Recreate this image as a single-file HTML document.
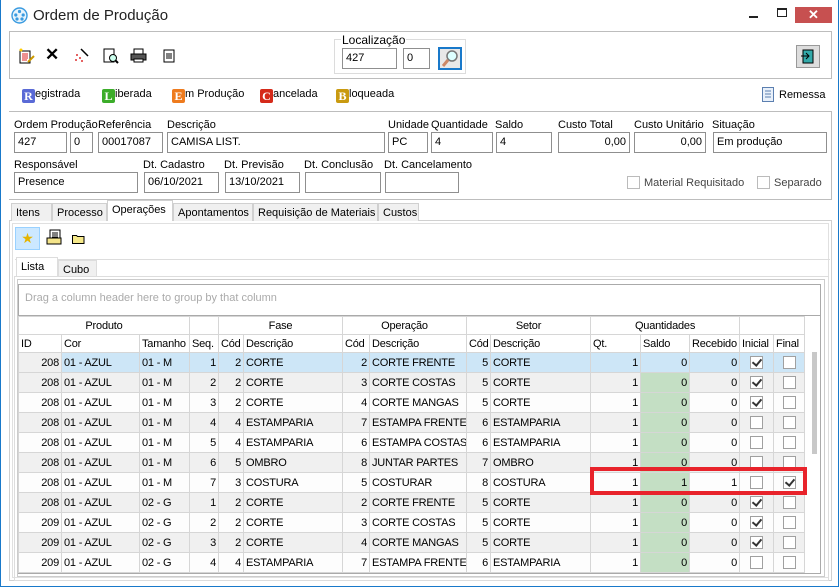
<!DOCTYPE html>
<html><head><meta charset="utf-8"><style>
*{box-sizing:border-box;margin:0;padding:0}
body{width:839px;height:587px;position:relative;overflow:hidden;background:#fff;font-family:"Liberation Sans",sans-serif;font-size:11px;color:#000}
.a{position:absolute}
.win{position:absolute;left:0;top:0;width:839px;height:587px;border:1px solid #1979ca;border-top:none;background:#fff}
.inp{position:absolute;height:21px;border:1px solid #8f8f8f;background:#fff;padding:3px 3px;font-size:11px;white-space:nowrap;overflow:hidden}
.r{text-align:right}
.lbl{position:absolute;font-size:11px;white-space:nowrap}
.panel{position:absolute;border:1px solid #bdbdbd;background:#fff}
.tab{position:absolute;top:203px;height:18px;border:1px solid #d0d0d0;border-bottom:none;background:#f0f0f0;padding:3px 4px;font-size:11px;white-space:nowrap;overflow:hidden}
.badge{display:inline-block;width:13px;height:14px;color:#fff;font-weight:bold;font-size:12px;line-height:14px;text-align:center;border-radius:2px;vertical-align:-3px;margin-right:0;font-family:"Liberation Serif",serif}
table{border-collapse:collapse;table-layout:fixed;position:absolute;left:17px;top:316px;width:786px;font-size:11px;letter-spacing:-0.2px}
td{border:1px solid #d6d6d6;height:20px;padding:0 2px;white-space:nowrap;overflow:hidden}
tr.h td{height:18px;background:#fff}
tr.h1 td{text-align:center}
td.n{text-align:right}
tr.g td{background:#f0f0f0}
tr.w td{background:#fdfdfd}
tr.s td{background:#cde6f7}
tr.s td.id{background:#f0f0f0}
td.sd{background:#c4dfc4!important}
tr.s td.sd{background:#cde6f7!important}
.cb{display:inline-block;width:13px;height:13px;border:1px solid #a0a0a0;background:#fff;vertical-align:middle;position:relative}
.cb.c::after{content:"";position:absolute;left:3px;top:0px;width:4px;height:7px;border:solid #333;border-width:0 2px 2px 0;transform:rotate(40deg)}
td.ck{text-align:center;padding:0}
</style></head><body>
<div class="win">
<svg class="a" style="left:10px;top:7px" width="17" height="17" viewBox="0 0 17 17"><circle cx="8.5" cy="8.5" r="7.5" fill="#e8f4fc" stroke="#3a9be0" stroke-width="1.4"/><circle cx="8.5" cy="4.5" r="1.6" fill="#3a9be0"/><circle cx="4.8" cy="8" r="1.6" fill="#3a9be0"/><circle cx="12.2" cy="8" r="1.6" fill="#3a9be0"/><circle cx="6" cy="12" r="1.6" fill="#3a9be0"/><circle cx="11" cy="12" r="1.6" fill="#3a9be0"/></svg>
<div class="lbl" style="left:32px;top:7px;font-size:15px;color:#222">Ordem de Produção</div>
<div class="a" style="left:748px;top:16px;width:9px;height:2px;background:#222"></div>
<div class="a" style="left:776px;top:8px;width:10px;height:9px;border:1px solid #222;border-top-width:2px"></div>
<div class="a" style="left:794px;top:7px;width:37px;height:16px;background:#c75050;color:#fff;text-align:center;font-size:13px;line-height:16px;font-weight:bold">✕</div>
<div class="panel" style="left:8px;top:31px;width:823px;height:48px"></div>
<svg class="a" style="left:17px;top:48px" width="17" height="17"><rect x="2" y="3" width="10" height="12" fill="#fff" stroke="#000"/><path d="M4 6h6M4 8h6M4 10h6M4 12h5" stroke="#d22"/><path d="M10 14l6-6" stroke="#c90" stroke-width="2"/><circle cx="3" cy="2" r="1.5" fill="#fc0"/></svg>
<div class="a" style="left:44px;top:45px;font-size:17px;font-weight:bold">✕</div>
<svg class="a" style="left:72px;top:47px" width="16" height="16"><path d="M8 2l7 7" stroke="#000" stroke-width="1.5"/><g fill="#d33"><circle cx="4" cy="8" r="1"/><circle cx="7" cy="11" r="1"/><circle cx="3" cy="13" r="1"/><circle cx="9" cy="14" r="1"/></g></svg>
<svg class="a" style="left:102px;top:48px" width="16" height="16"><rect x="1" y="1" width="10" height="13" fill="#fff" stroke="#000"/><circle cx="10" cy="10" r="3.5" fill="#cfe" stroke="#000"/><line x1="12.5" y1="12.5" x2="15" y2="15" stroke="#000" stroke-width="2"/></svg>
<svg class="a" style="left:129px;top:48px" width="17" height="15"><rect x="4" y="1" width="9" height="5" fill="#fff" stroke="#000"/><rect x="1" y="6" width="15" height="6" fill="#555" stroke="#000"/><rect x="4" y="11" width="9" height="3" fill="#fff" stroke="#000"/></svg>
<svg class="a" style="left:162px;top:49px" width="12" height="14"><rect x="1" y="1" width="10" height="12" fill="#fff" stroke="#000"/><path d="M4 4v6M6 4v6M8 4v6" stroke="#000"/></svg>
<div class="a" style="left:333px;top:39px;width:132px;height:35px;border:1px solid #dcdcdc"></div>
<div class="lbl" style="left:340px;top:33px;background:#fff;padding:0 1px;font-size:12px">Localização</div>
<div class="inp" style="left:341px;top:48px;width:55px">427</div>
<div class="inp" style="left:402px;top:48px;width:27px">0</div>
<div class="a" style="left:437px;top:47px;width:24px;height:23px;border:2px solid #1979ca;background:#e8e8e8"></div>
<svg class="a" style="left:441px;top:50px" width="17" height="17"><circle cx="10" cy="6" r="5" fill="#dff" stroke="#777" stroke-width="1.5"/><line x1="6" y1="10" x2="1" y2="16" stroke="#c86" stroke-width="3"/></svg>
<div class="a" style="left:795px;top:45px;width:24px;height:23px;border:1px solid #999;background:#ddd"></div>
<svg class="a" style="left:799px;top:48px" width="17" height="17"><rect x="3" y="2" width="10" height="13" fill="#3aa" stroke="#000"/><path d="M1 8h8M6 5l3 3-3 3" stroke="#000" fill="none"/></svg>
<div class="lbl" style="left:21px;top:88px"><span class="badge" style="background:#5a6ad6">R</span>egistrada</div>
<div class="lbl" style="left:101px;top:88px"><span class="badge" style="background:#3cad2a">L</span>iberada</div>
<div class="lbl" style="left:171px;top:88px"><span class="badge" style="background:#ee7b1e">E</span>m Produção</div>
<div class="lbl" style="left:259px;top:88px"><span class="badge" style="background:#d52a1a">C</span>ancelada</div>
<div class="lbl" style="left:335px;top:88px"><span class="badge" style="background:#c99a10">B</span>loqueada</div>
<svg class="a" style="left:761px;top:87px" width="12" height="15"><rect x="0.5" y="0.5" width="11" height="14" fill="#e8f0fa" stroke="#5b7fb0"/><path d="M3 4h6M3 7h6M3 10h6" stroke="#5b7fb0"/></svg>
<div class="lbl" style="left:778px;top:89px">Remessa</div>
<div class="a" style="left:8px;top:111px;width:823px;height:89px;border:1px solid #bdbdbd;border-left:none"></div>
<div class="lbl" style="left:13px;top:119px">Ordem Produção</div>
<div class="lbl" style="left:97px;top:119px">Referência</div>
<div class="lbl" style="left:166px;top:119px">Descrição</div>
<div class="lbl" style="left:387px;top:119px">Unidade</div>
<div class="lbl" style="left:430px;top:119px">Quantidade</div>
<div class="lbl" style="left:494px;top:119px">Saldo</div>
<div class="lbl" style="left:557px;top:119px">Custo Total</div>
<div class="lbl" style="left:633px;top:119px">Custo Unitário</div>
<div class="lbl" style="left:711px;top:119px">Situação</div>
<div class="inp" style="left:13px;top:132px;width:53px">427</div>
<div class="inp" style="left:69px;top:132px;width:23px">0</div>
<div class="inp" style="left:97px;top:132px;width:65px">00017087</div>
<div class="inp" style="left:166px;top:132px;width:218px">CAMISA LIST.</div>
<div class="inp" style="left:387px;top:132px;width:40px">PC</div>
<div class="inp" style="left:430px;top:132px;width:62px">4</div>
<div class="inp" style="left:495px;top:132px;width:56px">4</div>
<div class="inp r" style="left:557px;top:132px;width:72px">0,00</div>
<div class="inp r" style="left:633px;top:132px;width:72px">0,00</div>
<div class="inp" style="left:712px;top:132px;width:114px">Em produção</div>
<div class="lbl" style="left:13px;top:159px">Responsável</div>
<div class="lbl" style="left:142px;top:159px">Dt. Cadastro</div>
<div class="lbl" style="left:223px;top:159px">Dt. Previsão</div>
<div class="lbl" style="left:303px;top:159px">Dt. Conclusão</div>
<div class="lbl" style="left:383px;top:159px">Dt. Cancelamento</div>
<div class="inp" style="left:13px;top:172px;width:124px">Presence</div>
<div class="inp" style="left:143px;top:172px;width:75px">06/10/2021</div>
<div class="inp" style="left:224px;top:172px;width:75px">13/10/2021</div>
<div class="inp" style="left:304px;top:172px;width:76px"></div>
<div class="inp" style="left:384px;top:172px;width:74px"></div>
<div class="a" style="left:626px;top:176px;width:13px;height:13px;border:1px solid #bbb"></div>
<div class="lbl" style="left:643px;top:177px;color:#444">Material Requisitado</div>
<div class="a" style="left:756px;top:176px;width:13px;height:13px;border:1px solid #bbb"></div>
<div class="lbl" style="left:773px;top:177px;color:#444">Separado</div>
<div class="a" style="left:8px;top:220px;width:823px;height:361px;border:1px solid #d0d0d0"></div>
<div class="a" style="left:11px;top:223px;width:817px;height:355px;border:1px solid #e0e0e0"></div>
<div class="tab" style="left:10px;width:41px">Itens</div>
<div class="tab" style="left:51px;width:55px">Processo</div>
<div class="tab" style="left:106px;top:200px;height:21px;width:66px;background:#fff">Operações</div>
<div class="tab" style="left:172px;width:80px">Apontamentos</div>
<div class="tab" style="left:252px;width:125px">Requisição de Materiais</div>
<div class="tab" style="left:377px;width:41px">Custos</div>
<div class="a" style="left:14px;top:227px;width:815px;height:33px;border-bottom:1px solid #ddd"></div>
<div class="a" style="left:14px;top:227px;width:25px;height:23px;background:#cce8ff;border:1px solid #99d1ff;text-align:center;line-height:20px;color:#e5b400;font-size:14px">★</div>
<svg class="a" style="left:45px;top:229px" width="17" height="17"><rect x="4" y="1" width="10" height="11" fill="#fff" stroke="#000"/><path d="M6 4h6M6 6h6M6 8h6" stroke="#000"/><path d="M1 9h14v6H1z" fill="#f4e48a" stroke="#000"/></svg>
<svg class="a" style="left:71px;top:233px" width="13" height="11"><path d="M0.5 2.5h4l1 1h6.5v7H0.5z" fill="#f6e98a" stroke="#000"/></svg>
<div class="a" style="left:15px;top:257px;width:42px;height:20px;background:#fff;border:1px solid #ddd;border-bottom:none;padding:3px 4px">Lista</div>
<div class="a" style="left:57px;top:260px;width:39px;height:17px;background:#f0f0f0;border:1px solid #ddd;border-bottom:none;padding:3px 4px">Cubo</div>
<div class="a" style="left:13px;top:276px;width:815px;height:305px;border:1px solid #ddd"></div>
<div class="a" style="left:16px;top:279px;width:808px;height:298px;border:1px solid #ccc"></div>
<div class="a" style="left:17px;top:284px;width:803px;height:290px;border:1px solid #aaa;background:#fff"></div>
<div class="lbl" style="left:24px;top:292px;color:#aaa">Drag a column header here to group by that column</div>
<div class="a" style="left:17px;top:315px;width:803px;height:1px;background:#aaa"></div>
<div class="a" style="left:811px;top:352px;width:5px;height:102px;background:#c8c8c8"></div>
<table>
<colgroup><col style="width:43px"><col style="width:78px"><col style="width:50px"><col style="width:29px"><col style="width:25px"><col style="width:99px"><col style="width:27px"><col style="width:97px"><col style="width:24px"><col style="width:100px"><col style="width:50px"><col style="width:49px"><col style="width:50px"><col style="width:34px"><col style="width:31px"></colgroup>
<tr class="h h1"><td colspan="3">Produto</td><td></td><td colspan="2">Fase</td><td colspan="2">Operação</td><td colspan="2">Setor</td><td colspan="3">Quantidades</td><td colspan="2"></td></tr>
<tr class="h"><td>ID</td><td>Cor</td><td>Tamanho</td><td>Seq.</td><td>Cód</td><td>Descrição</td><td>Cód</td><td>Descrição</td><td>Cód</td><td>Descrição</td><td>Qt.</td><td>Saldo</td><td>Recebido</td><td>Inicial</td><td>Final</td></tr>
<tr class="s"><td class="n id">208</td><td>01 - AZUL</td><td>01 - M</td><td class="n">1</td><td class="n">2</td><td>CORTE</td><td class="n">2</td><td>CORTE FRENTE</td><td class="n">5</td><td>CORTE</td><td class="n">1</td><td class="n sd">0</td><td class="n">0</td><td class="ck"><span class="cb c"></span></td><td class="ck"><span class="cb"></span></td></tr>
<tr class="g"><td class="n">208</td><td>01 - AZUL</td><td>01 - M</td><td class="n">2</td><td class="n">2</td><td>CORTE</td><td class="n">3</td><td>CORTE COSTAS</td><td class="n">5</td><td>CORTE</td><td class="n">1</td><td class="n sd">0</td><td class="n">0</td><td class="ck"><span class="cb c"></span></td><td class="ck"><span class="cb"></span></td></tr>
<tr class="w"><td class="n">208</td><td>01 - AZUL</td><td>01 - M</td><td class="n">3</td><td class="n">2</td><td>CORTE</td><td class="n">4</td><td>CORTE MANGAS</td><td class="n">5</td><td>CORTE</td><td class="n">1</td><td class="n sd">0</td><td class="n">0</td><td class="ck"><span class="cb c"></span></td><td class="ck"><span class="cb"></span></td></tr>
<tr class="g"><td class="n">208</td><td>01 - AZUL</td><td>01 - M</td><td class="n">4</td><td class="n">4</td><td>ESTAMPARIA</td><td class="n">7</td><td>ESTAMPA FRENTE</td><td class="n">6</td><td>ESTAMPARIA</td><td class="n">1</td><td class="n sd">0</td><td class="n">0</td><td class="ck"><span class="cb"></span></td><td class="ck"><span class="cb"></span></td></tr>
<tr class="w"><td class="n">208</td><td>01 - AZUL</td><td>01 - M</td><td class="n">5</td><td class="n">4</td><td>ESTAMPARIA</td><td class="n">6</td><td>ESTAMPA COSTAS</td><td class="n">6</td><td>ESTAMPARIA</td><td class="n">1</td><td class="n sd">0</td><td class="n">0</td><td class="ck"><span class="cb"></span></td><td class="ck"><span class="cb"></span></td></tr>
<tr class="g"><td class="n">208</td><td>01 - AZUL</td><td>01 - M</td><td class="n">6</td><td class="n">5</td><td>OMBRO</td><td class="n">8</td><td>JUNTAR PARTES</td><td class="n">7</td><td>OMBRO</td><td class="n">1</td><td class="n sd">0</td><td class="n">0</td><td class="ck"><span class="cb"></span></td><td class="ck"><span class="cb"></span></td></tr>
<tr class="w"><td class="n">208</td><td>01 - AZUL</td><td>01 - M</td><td class="n">7</td><td class="n">3</td><td>COSTURA</td><td class="n">5</td><td>COSTURAR</td><td class="n">8</td><td>COSTURA</td><td class="n">1</td><td class="n sd">1</td><td class="n">1</td><td class="ck"><span class="cb"></span></td><td class="ck"><span class="cb c"></span></td></tr>
<tr class="g"><td class="n">208</td><td>01 - AZUL</td><td>02 - G</td><td class="n">1</td><td class="n">2</td><td>CORTE</td><td class="n">2</td><td>CORTE FRENTE</td><td class="n">5</td><td>CORTE</td><td class="n">1</td><td class="n sd">0</td><td class="n">0</td><td class="ck"><span class="cb c"></span></td><td class="ck"><span class="cb"></span></td></tr>
<tr class="w"><td class="n">209</td><td>01 - AZUL</td><td>02 - G</td><td class="n">2</td><td class="n">2</td><td>CORTE</td><td class="n">3</td><td>CORTE COSTAS</td><td class="n">5</td><td>CORTE</td><td class="n">1</td><td class="n sd">0</td><td class="n">0</td><td class="ck"><span class="cb c"></span></td><td class="ck"><span class="cb"></span></td></tr>
<tr class="g"><td class="n">209</td><td>01 - AZUL</td><td>02 - G</td><td class="n">3</td><td class="n">2</td><td>CORTE</td><td class="n">4</td><td>CORTE MANGAS</td><td class="n">5</td><td>CORTE</td><td class="n">1</td><td class="n sd">0</td><td class="n">0</td><td class="ck"><span class="cb c"></span></td><td class="ck"><span class="cb"></span></td></tr>
<tr class="w"><td class="n">209</td><td>01 - AZUL</td><td>02 - G</td><td class="n">4</td><td class="n">4</td><td>ESTAMPARIA</td><td class="n">7</td><td>ESTAMPA FRENTE</td><td class="n">6</td><td>ESTAMPARIA</td><td class="n">1</td><td class="n sd">0</td><td class="n">0</td><td class="ck"><span class="cb"></span></td><td class="ck"><span class="cb"></span></td></tr>
</table>
<div class="a" style="left:589px;top:467px;width:217px;height:28px;border:4px solid #e8232b"></div>
</div>
</body></html>
